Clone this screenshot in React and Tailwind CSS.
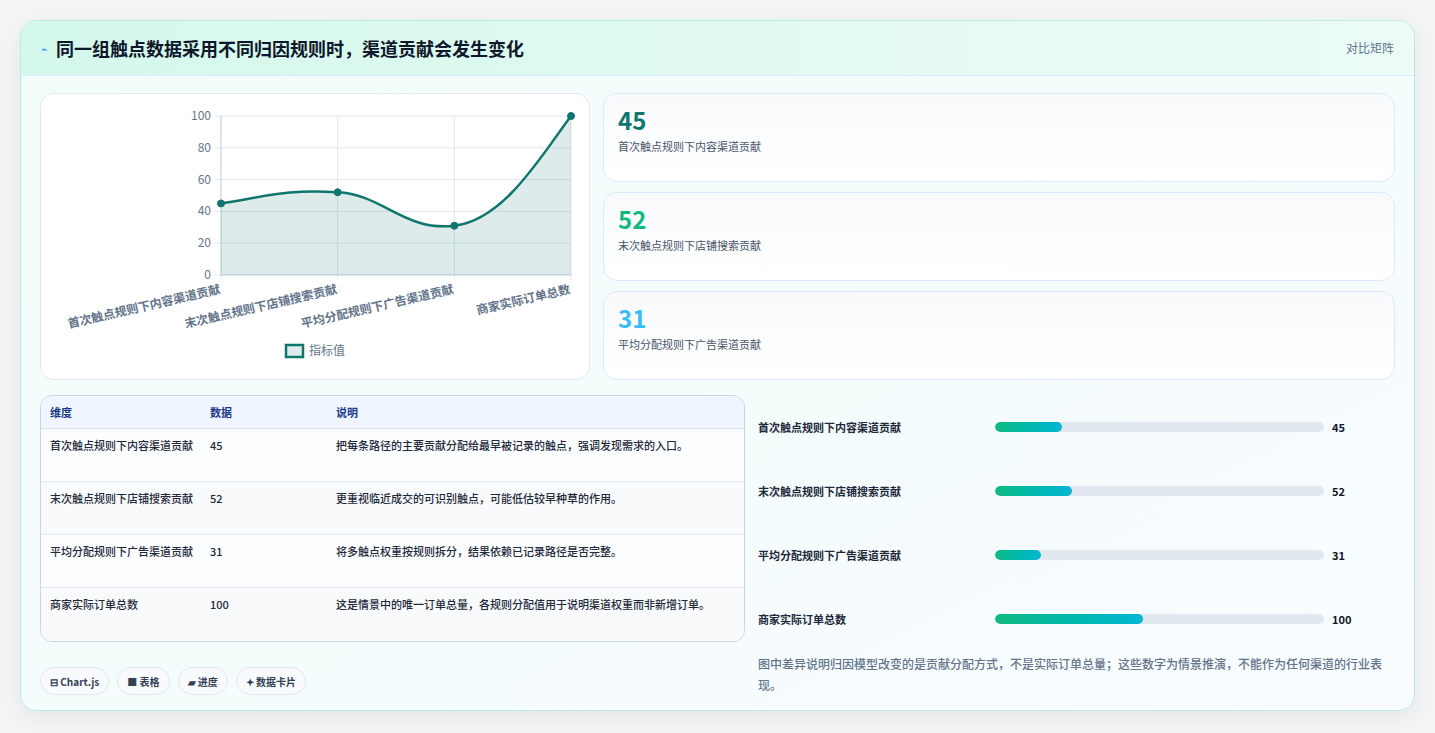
import React from "react";

const F = { fontFamily: '"Noto Sans CJK SC","Noto Sans",sans-serif' };
const rows = [
  ["首次触点规则下内容渠道贡献", "45", "把每条路径的主要贡献分配给最早被记录的触点，强调发现需求的入口。"],
  ["末次触点规则下店铺搜索贡献", "52", "更重视临近成交的可识别触点，可能低估较早种草的作用。"],
  ["平均分配规则下广告渠道贡献", "31", "将多触点权重按规则拆分，结果依赖已记录路径是否完整。"],
  ["商家实际订单总数", "100", "这是情景中的唯一订单总量，各规则分配值用于说明渠道权重而非新增订单。"],
];

function Chart() {
  const x0 = 180, x1 = 530, yb = 181, yt = 22;
  const xs = [0, 1, 2, 3].map((i) => x0 + (i * (x1 - x0)) / 3);
  const vals = [45, 52, 31, 100];
  const ys = vals.map((v) => yb - (v / 100) * (yb - yt));
  const p = `M${xs[0]},${ys[0]} C${xs[0] + 50},${ys[0] - 8} ${xs[1] - 50},${ys[1] - 3} ${xs[1]},${ys[1]} C${xs[1] + 45},${ys[1] + 2} ${xs[2] - 50},${ys[2] + 6} ${xs[2]},${ys[2]} C${xs[2] + 50},${ys[2] - 6} ${xs[3] - 30},${ys[3] + 40} ${xs[3]},${ys[3]}`;
  const labels = ["首次触点规则下内容渠道贡献", "末次触点规则下店铺搜索贡献", "平均分配规则下广告渠道贡献", "商家实际订单总数"];
  return (
    <svg width="549" height="286" viewBox="0 0 549 286" style={F}>
      {[0, 20, 40, 60, 80, 100].map((v) => {
        const y = yb - (v / 100) * (yb - yt);
        return (
          <g key={v}>
            <line x1={x0 - 6} x2={x1} y1={y} y2={y} stroke="#e2e8f0" />
            <text x={x0 - 10} y={y + 4} textAnchor="end" fontSize="12" fill="#64748b">{v}</text>
          </g>
        );
      })}
      {xs.map((x, i) => (
        <line key={i} x1={x} x2={x} y1={yt} y2={yb + 5} stroke="#e2e8f0" />
      ))}
      <line x1={x0} x2={x1} y1={yb} y2={yb} stroke="#cbd5e1" />
      <line x1={x0} x2={x0} y1={yt} y2={yb} stroke="#cbd5e1" />
      <path d={`${p} L${xs[3]},${yb} L${xs[0]},${yb} Z`} fill="rgba(15,118,110,0.14)" />
      <path d={p} fill="none" stroke="#0f766e" strokeWidth="2.5" />
      {xs.map((x, i) => (
        <circle key={i} cx={x} cy={ys[i]} r="3.5" fill="#0f766e" stroke="#0f766e" />
      ))}
      {labels.map((l, i) => (
        <text key={i} x={xs[i]} y={yb + 18} textAnchor="end" fontSize="12" fontWeight="700" fill="#64748b" transform={`rotate(-13 ${xs[i]} ${yb + 18})`}>{l}</text>
      ))}
      <rect x="245" y="251" width="17" height="12" fill="rgba(15,118,110,0.14)" stroke="#0f766e" strokeWidth="2.5" />
      <text x="268" y="261" fontSize="12" fill="#64748b">指标值</text>
    </svg>
  );
}

export default function App() {
  return (
    <div className="w-[1435px] h-[733px] bg-[#f3f4f6] pt-[20px] pl-[20px]" style={F}>
      <div className="w-[1395px] h-[691px] rounded-[16px] border border-[#b9ece0] bg-gradient-to-br from-[#f2fdf9] to-[#f8fcff] overflow-hidden shadow-[0_6px_20px_rgba(0,0,0,0.06)]">
        <div className="h-[55px] flex items-center justify-between px-[20px] bg-gradient-to-r from-[#d4f8ec] to-[#ecfbf6] border-b border-[#dbeafe]">
          <div className="flex items-center gap-[8px]">
            <span className="text-[11px] text-[#3b82f6]">⌁</span>
            <span className="text-[18px] font-bold text-[#0f172a]">同一组触点数据采用不同归因规则时，渠道贡献会发生变化</span>
          </div>
          <span className="text-[12px] text-[#64748b]">对比矩阵</span>
        </div>
        <div className="px-[19px] pt-[17px]">
          <div className="flex gap-[13px]">
            <div className="w-[550px] h-[287px] rounded-[14px] border border-[#e2e8f0] bg-white">
              <Chart />
            </div>
            <div className="flex-1 flex flex-col gap-[10px]">
              {[["45", "text-[#0f766e]", "首次触点规则下内容渠道贡献"], ["52", "text-[#10b981]", "末次触点规则下店铺搜索贡献"], ["31", "text-[#38bdf8]", "平均分配规则下广告渠道贡献"]].map(([n, c, t]) => (
                <div key={n} className="h-[89px] rounded-[14px] border border-[#dbeafe] bg-gradient-to-b from-[#f8fafc] to-white px-[14px] pt-[10px]">
                  <div className={`text-[24px] font-bold leading-[32px] ${c}`}>{n}</div>
                  <div className="text-[11px] text-[#475569] mt-[2px]">{t}</div>
                </div>
              ))}
            </div>
          </div>
          <div className="flex gap-[13px] mt-[15px]">
            <div className="w-[705px]">
              <div className="rounded-[12px] border border-[#cbd5e1] overflow-hidden bg-[#f8fafc] text-[11px]">
                <div className="flex h-[33px] items-center bg-[#eff6ff] border-b border-[#dbe3ee] font-bold text-[#1e3a8a]">
                  <div className="w-[169px] pl-[9px]">维度</div>
                  <div className="w-[126px]">数据</div>
                  <div className="flex-1">说明</div>
                </div>
                {rows.map((r, i) => (
                  <div key={i} className={`flex py-[7px] h-[53px] leading-[18px] text-[#1e293b] font-medium ${i < 3 ? "border-b border-[#e2e8f0]" : ""} ${i % 2 ? "bg-[#f8fafc]" : "bg-[#fbfdff]"}`}>
                    <div className="w-[169px] pl-[9px] pr-[16px]">{r[0]}</div>
                    <div className="w-[126px]">{r[1]}</div>
                    <div className="flex-1 pr-[8px]">{r[2]}</div>
                  </div>
                ))}
              </div>
              <div className="flex gap-[8px] mt-[25px]">
                {["⊟ Chart.js", "■ 表格", "▰ 进度", "✦ 数据卡片"].map((c) => (
                  <span key={c} className="h-[28px] px-[9px] flex items-center rounded-full border border-[#e2e8f0] bg-[#f8fafc] text-[10px] font-bold text-[#334155]">{c}</span>
                ))}
              </div>
            </div>
            <div className="flex-1">
              <div className="flex flex-col">
                {rows.map((r, i) => (
                  <div key={i} className="h-[64px] flex items-center">
                    <div className="w-[237px] text-[11px] font-bold text-[#1e293b]">{r[0]}</div>
                    <div className="w-[329px] h-[10px] rounded-full bg-[#e2e8f0] overflow-hidden">
                      <div className="h-full rounded-full bg-gradient-to-r from-[#10b981] to-[#06b6d4]" style={{ width: `${Number(r[1]) * 0.45}%` }} />
                    </div>
                    <div className="ml-[8px] text-[11px] font-bold text-[#0f172a]">{r[1]}</div>
                  </div>
                ))}
              </div>
              <div className="mt-[2px] text-[12px] leading-[21px] text-[#64748b] font-medium">图中差异说明归因模型改变的是贡献分配方式，不是实际订单总量；这些数字为情景推演，不能作为任何渠道的行业表现。</div>
            </div>
          </div>
        </div>
      </div>
    </div>
  );
}
